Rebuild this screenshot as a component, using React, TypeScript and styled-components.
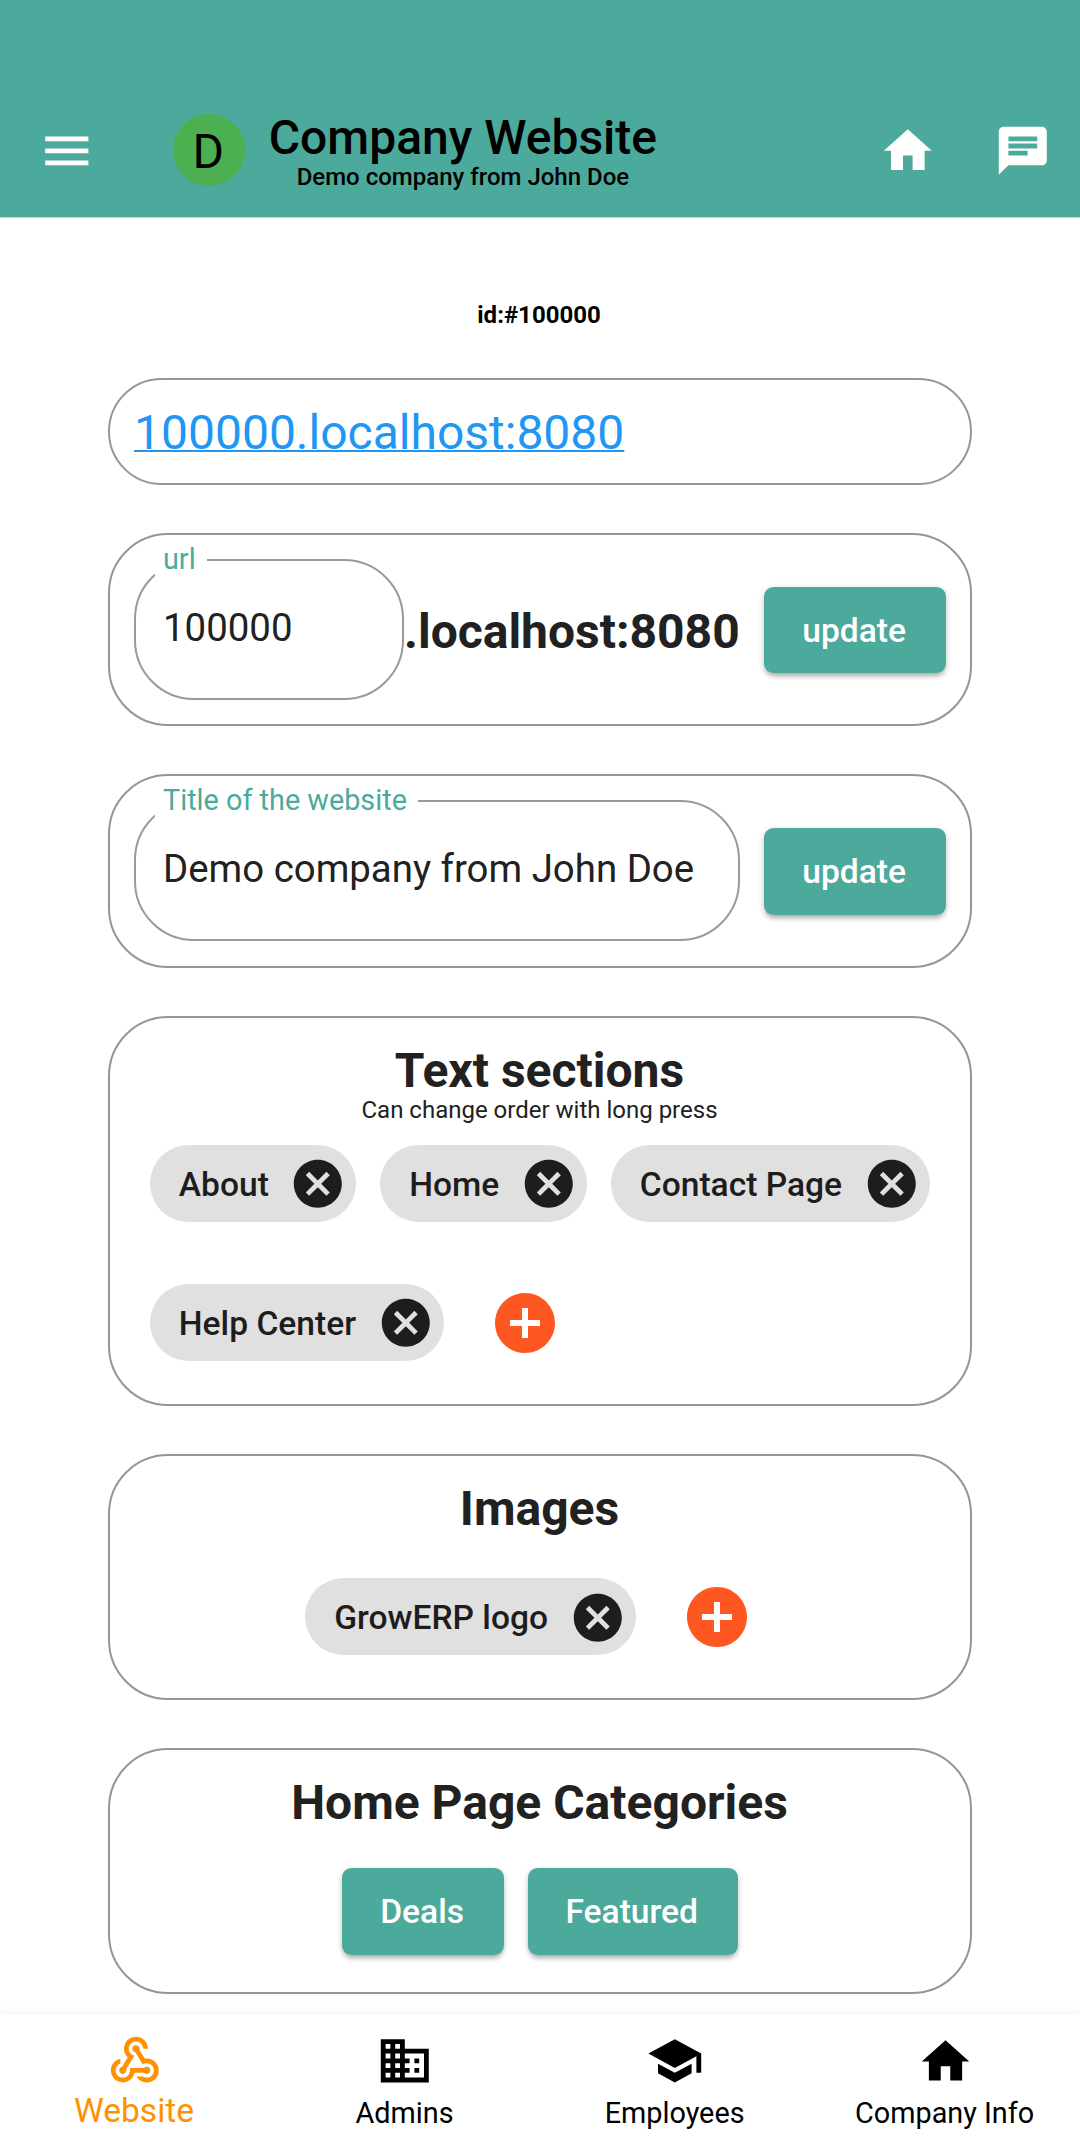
import React from "react";
import styled, { createGlobalStyle } from "styled-components";
import {
  MdMenu,
  MdHome,
  MdChat,
  MdCancel,
  MdAddCircle,
  MdWebhook,
  MdBusiness,
  MdSchool,
} from "react-icons/md";

const teal = "#4baa9b";
const ink = "#212121";

const GlobalStyle = createGlobalStyle`
  *, *::before, *::after { box-sizing: border-box; }
  body {
    margin: 0;
    background: #fff;
    font-family: Roboto, "Liberation Sans", sans-serif;
    color: ${ink};
  }
  svg { display: block; flex: none; }
`;

const Screen = styled.div`
  display: flex;
  flex-direction: column;
  width: 1080px;
  height: 2148px;
  overflow: hidden;
`;

const AppBar = styled.header`
  display: flex;
  align-items: center;
  flex: none;
  height: 218px;
  padding: 83.6px 28.5px 0 38.4px;
  border-bottom: 1px solid #b7dcd7;
  background: ${teal};
  color: #fff;
`;

const Avatar = styled.div`
  width: 72px;
  height: 72px;
  margin: 0 24px 0 76.8px;
  padding: 2px 1px 0 0;
  border-radius: 50%;
  background: #4caf50;
  color: #000;
  font-size: 48px;
  line-height: 72px;
  text-align: center;
`;

const TitleBlock = styled.div`
  display: flex;
  flex-direction: column;
  align-items: center;
  color: #000;
  font-weight: 500;
  margin-top: -1px;
`;

const Title = styled.h1`
  margin: 0;
  font-size: 48px;
  font-weight: 500;
  line-height: 56px;
  white-space: nowrap;
`;

const Subtitle = styled.div`
  font-size: 24px;
  line-height: 23px;
  white-space: nowrap;
`;

const Actions = styled.div`
  display: flex;
  gap: 57.6px;
  margin-left: auto;
`;

const Content = styled.main`
  display: flex;
  flex-direction: column;
  flex: 1;
  gap: 48px;
  padding: 82px 108px 0;
`;

const RecordId = styled.div`
  padding-right: 2px;
  font-size: 24px;
  font-weight: 700;
  line-height: 30px;
  text-align: center;
  color: #000;
`;

const Card = styled.section<{ $height: number }>`
  flex: none;
  height: ${(p) => p.$height}px;
  border: 2px solid #959595;
  border-radius: 60px;
`;

const RowCard = styled(Card)`
  display: flex;
  align-items: center;
  padding: 0 24px;
`;

const CenterCard = styled(Card)`
  display: flex;
  flex-direction: column;
  align-items: center;
  padding-top: 25px;
`;

const SiteLink = styled.a`
  padding-top: 3px;
  color: #2196f3;
  font-size: 48px;
  line-height: 56px;
  text-decoration: underline;
  text-decoration-thickness: 2.4px;
  text-underline-offset: 1px;
  text-decoration-skip-ink: none;
`;

const Field = styled.div<{ $width: number }>`
  position: relative;
  width: ${(p) => p.$width}px;
  height: 141px;
  padding: 0 0 4px 27px;
  border: 2px solid #9a9a9a;
  border-radius: 60px;
  font-size: 38.4px;
  line-height: 133px;
  white-space: nowrap;
`;

const FieldLabel = styled.label`
  position: absolute;
  left: 19px;
  top: -19px;
  padding: 0 11.5px 0 8px;
  background: #fff;
  color: ${teal};
  font-size: 28.8px;
  line-height: 34px;
`;

const Domain = styled.span`
  padding-top: 5px;
  font-size: 48px;
  font-weight: 700;
  line-height: 56px;
`;

const Button = styled.button`
  height: 86.4px;
  padding: 0 39.6px 0 37.8px;
  border: 0;
  border-radius: 9.6px;
  background: ${teal};
  color: #fff;
  font-family: inherit;
  font-size: 33.6px;
  font-weight: 500;
  box-shadow: 0 5px 5px -2px rgba(0, 0, 0, 0.2), 0 2px 6px rgba(0, 0, 0, 0.2);
`;

const EndButton = styled(Button)`
  margin: 1px 0 0 auto;
  padding: 0 40px 0 38px;
`;

const Heading = styled.h2`
  margin: 0;
  padding-right: 1px;
  font-size: 48px;
  font-weight: 700;
  line-height: 56px;
`;

const Hint = styled.div`
  padding-right: 1px;
  margin-top: -1px;
  font-size: 24px;
  line-height: 24px;
`;

const ChipWrap = styled.div`
  display: flex;
  flex-wrap: wrap;
  align-items: center;
  gap: 62px 24px;
  width: 100%;
  padding: 23px 30px 0 40px;
`;

const CenterRow = styled.div<{ $top: number }>`
  display: flex;
  align-items: center;
  gap: 24px;
  margin-top: ${(p) => p.$top}px;
`;

const ChipBox = styled.div`
  display: flex;
  align-items: center;
  height: 77px;
  gap: 20.6px;
  padding: 2px 9.4px 0 28.8px;
  border-radius: 39px;
  background: #e0e0e0;
  color: #1d1d1d;
  font-size: 33.6px;
  font-weight: 500;
  white-space: nowrap;
`;

const AddButton = styled.span`
  margin: -9px 21.6px -10px 21.4px;
  color: #ff5722;
`;

const NavBar = styled.nav`
  position: relative;
  display: flex;
  flex: none;
  height: 134px;
  padding-top: 18px;
  background: #fff;
  box-shadow: 0 -1px 9px rgba(0, 0, 0, 0.07);
`;

const NavItem = styled.div<{ $active?: boolean }>`
  display: flex;
  flex-direction: column;
  align-items: center;
  width: 270px;
  color: ${(p) => (p.$active ? "#ff9100" : "#000")};
  font-size: ${(p) => (p.$active ? 33.6 : 28.8)}px;
`;

const NavIcon = styled.span`
  display: flex;
  align-items: center;
  justify-content: center;
  height: 58px;
`;

const NavLabel = styled.span<{ $active?: boolean }>`
  padding-right: ${(p) => (p.$active ? 2 : 0.8)}px;
  line-height: 40px;
  margin-top: ${(p) => (p.$active ? 1 : 3)}px;
`;

function Chip({ label }: { label: string }) {
  return (
    <ChipBox>
      {label}
      <MdCancel size={57.6} />
    </ChipBox>
  );
}

function Add() {
  return (
    <AddButton>
      <MdAddCircle size={72} />
    </AddButton>
  );
}

const destinations = [
  { label: "Website", icon: <MdWebhook size={57.6} />, active: true },
  { label: "Admins", icon: <MdBusiness size={57.6} /> },
  { label: "Employees", icon: <MdSchool size={57.6} /> },
  { label: "Company Info", icon: <MdHome size={57} /> },
];

export default function App() {
  return (
    <Screen>
      <GlobalStyle />
      <AppBar>
        <MdMenu size={57.6} />
        <Avatar>D</Avatar>
        <TitleBlock>
          <Title>Company Website</Title>
          <Subtitle>Demo company from John Doe</Subtitle>
        </TitleBlock>
        <Actions>
          <MdHome size={57.6} />
          <MdChat size={57.6} />
        </Actions>
      </AppBar>
      <Content>
        <RecordId>id:#100000</RecordId>
        <RowCard $height={107}>
          <SiteLink>100000.localhost:8080</SiteLink>
        </RowCard>
        <RowCard $height={193.2}>
          <Field $width={270}>
            <FieldLabel>url</FieldLabel>
            100000
          </Field>
          <Domain>.localhost:8080</Domain>
          <EndButton>update</EndButton>
        </RowCard>
        <RowCard $height={193.4}>
          <Field $width={606}>
            <FieldLabel>Title of the website</FieldLabel>
            Demo company from John Doe
          </Field>
          <EndButton>update</EndButton>
        </RowCard>
        <CenterCard $height={390.4}>
          <Heading>Text sections</Heading>
          <Hint>Can change order with long press</Hint>
          <ChipWrap>
            <Chip label="About" />
            <Chip label="Home" />
            <Chip label="Contact Page" />
            <Chip label="Help Center" />
            <Add />
          </ChipWrap>
        </CenterCard>
        <CenterCard $height={246.2}>
          <Heading>Images</Heading>
          <CenterRow $top={41.4}>
            <Chip label="GrowERP logo" />
            <Add />
          </CenterRow>
        </CenterCard>
        <CenterCard $height={246}>
          <Heading>Home Page Categories</Heading>
          <CenterRow $top={37}>
            <Button>Deals</Button>
            <Button>Featured</Button>
          </CenterRow>
        </CenterCard>
      </Content>
      <NavBar>
        {destinations.map((d) => (
          <NavItem key={d.label} $active={d.active}>
            <NavIcon>{d.icon}</NavIcon>
            <NavLabel $active={d.active}>{d.label}</NavLabel>
          </NavItem>
        ))}
      </NavBar>
    </Screen>
  );
}
